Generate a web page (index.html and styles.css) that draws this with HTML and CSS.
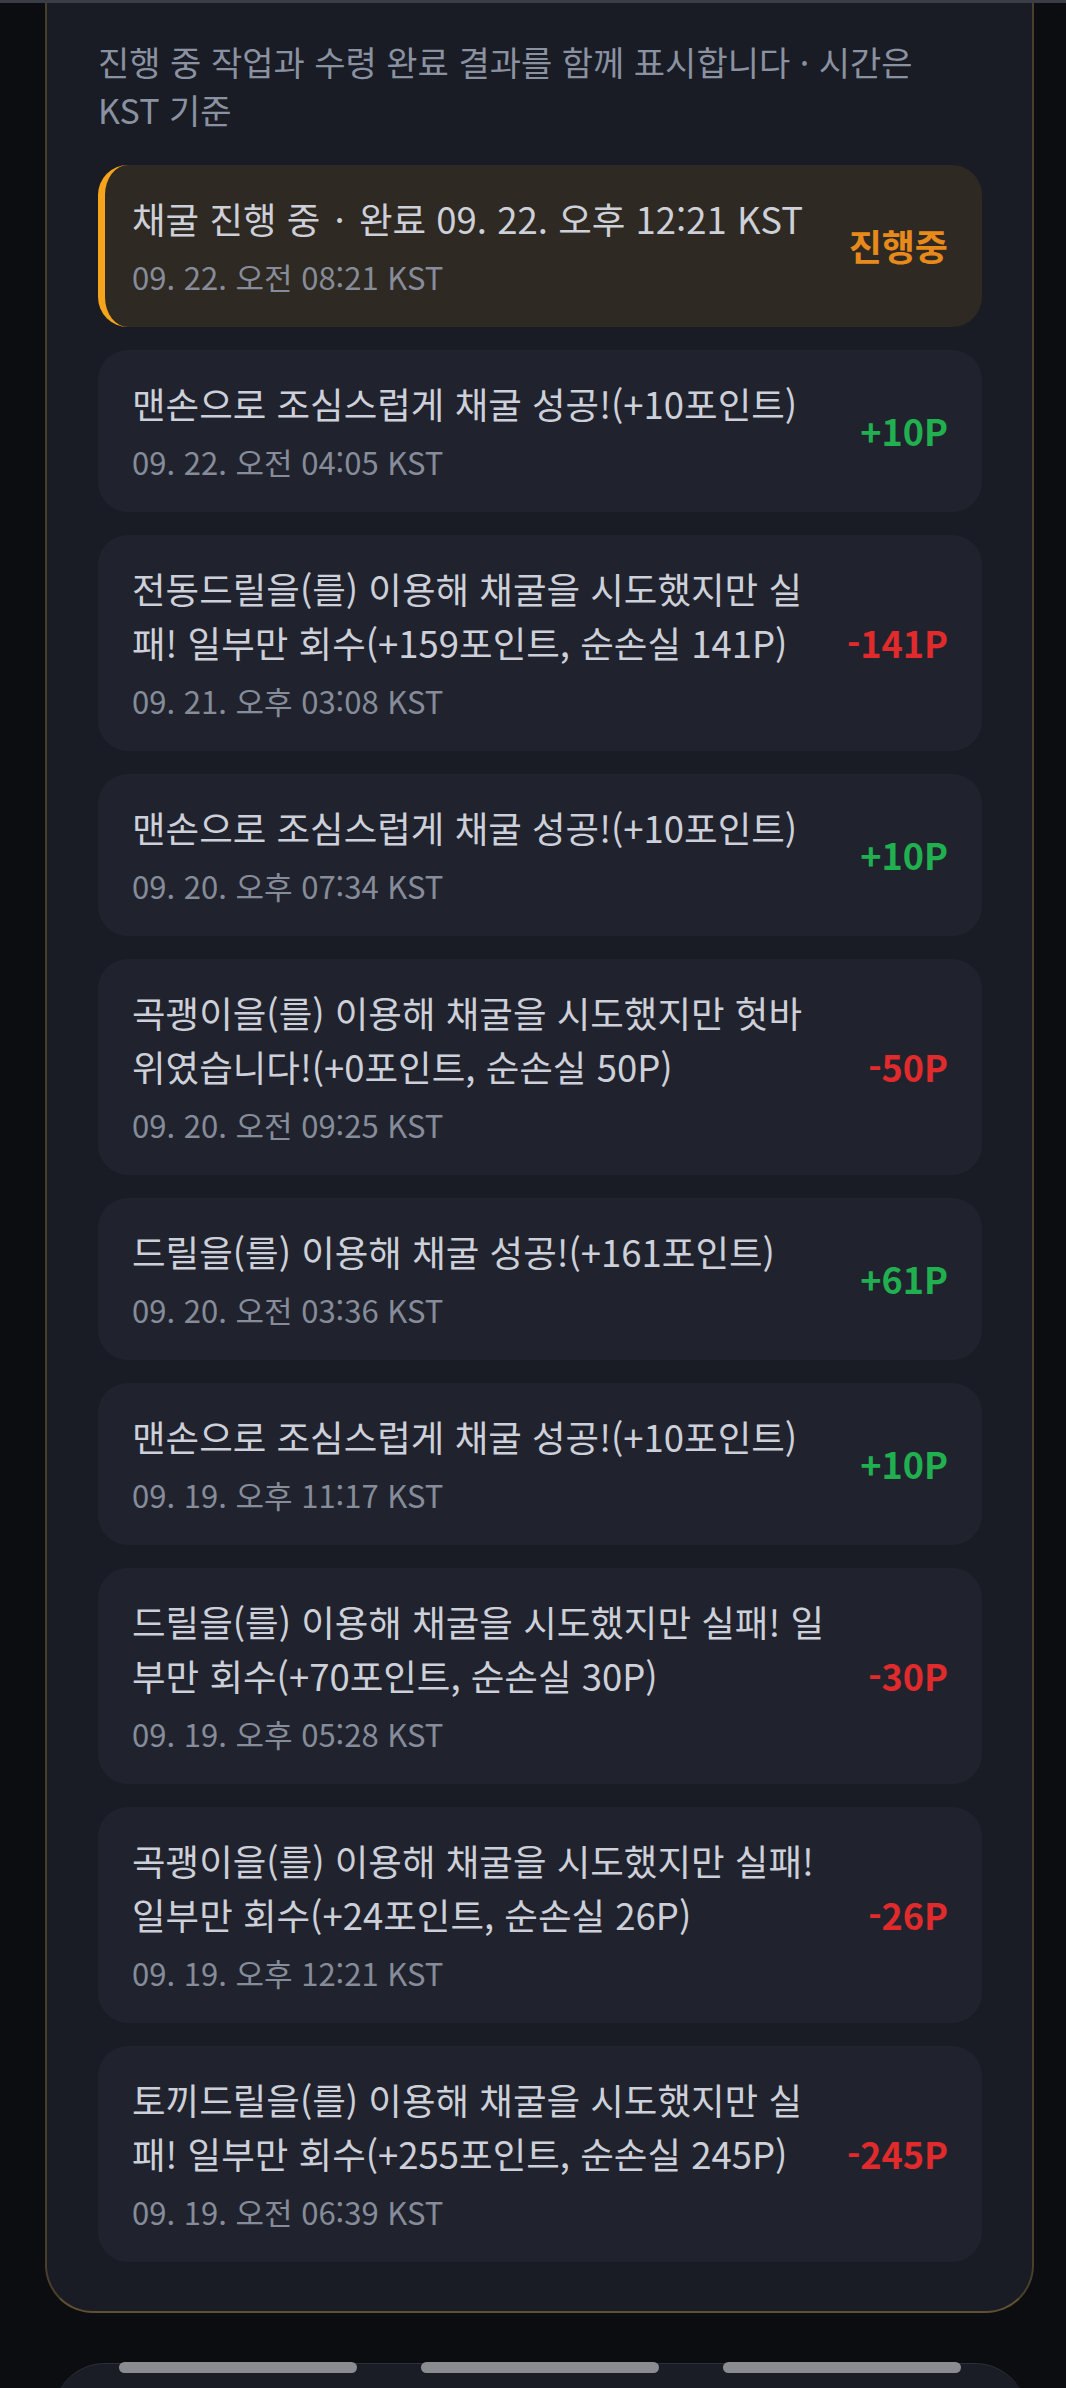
FILE: index.html
```html
<!DOCTYPE html>
<html lang="ko">
<head>
<meta charset="utf-8">
<title>채굴 기록</title>
<link rel="stylesheet" href="styles.css">
</head>
<body>
<div class="topbar"></div>
<section class="panel">
  <p class="intro">진행 중 작업과 수령 완료 결과를 함께 표시합니다 · 시간은 KST 기준</p>
  <ul class="log">
    <li class="entry entry--active">
      <div class="entry-main">
        <div class="entry-title">채굴 진행 중 <span class="sep">·</span> 완료 09. 22. 오후 12:21 KST</div>
        <div class="entry-time">09. 22. 오전 08:21 KST</div>
      </div>
      <div class="entry-amount amount--pending">진행중</div>
    </li>
    <li class="entry">
      <div class="entry-main">
        <div class="entry-title">맨손으로 조심스럽게 채굴 성공!(+10포인트)</div>
        <div class="entry-time">09. 22. 오전 04:05 KST</div>
      </div>
      <div class="entry-amount amount--plus">+10P</div>
    </li>
    <li class="entry">
      <div class="entry-main">
        <div class="entry-title">전동드릴을(를) 이용해 채굴을 시도했지만 실패! 일부만 회수(+159포인트, 순손실 141P)</div>
        <div class="entry-time">09. 21. 오후 03:08 KST</div>
      </div>
      <div class="entry-amount amount--minus">-141P</div>
    </li>
    <li class="entry">
      <div class="entry-main">
        <div class="entry-title">맨손으로 조심스럽게 채굴 성공!(+10포인트)</div>
        <div class="entry-time">09. 20. 오후 07:34 KST</div>
      </div>
      <div class="entry-amount amount--plus">+10P</div>
    </li>
    <li class="entry">
      <div class="entry-main">
        <div class="entry-title">곡괭이을(를) 이용해 채굴을 시도했지만 헛바위였습니다!(+0포인트, 순손실 50P)</div>
        <div class="entry-time">09. 20. 오전 09:25 KST</div>
      </div>
      <div class="entry-amount amount--minus">-50P</div>
    </li>
    <li class="entry">
      <div class="entry-main">
        <div class="entry-title">드릴을(를) 이용해 채굴 성공!(+161포인트)</div>
        <div class="entry-time">09. 20. 오전 03:36 KST</div>
      </div>
      <div class="entry-amount amount--plus">+61P</div>
    </li>
    <li class="entry">
      <div class="entry-main">
        <div class="entry-title">맨손으로 조심스럽게 채굴 성공!(+10포인트)</div>
        <div class="entry-time">09. 19. 오후 11:17 KST</div>
      </div>
      <div class="entry-amount amount--plus">+10P</div>
    </li>
    <li class="entry">
      <div class="entry-main">
        <div class="entry-title">드릴을(를) 이용해 채굴을 시도했지만 실패! 일부만 회수(+70포인트, 순손실 30P)</div>
        <div class="entry-time">09. 19. 오후 05:28 KST</div>
      </div>
      <div class="entry-amount amount--minus">-30P</div>
    </li>
    <li class="entry">
      <div class="entry-main">
        <div class="entry-title">곡괭이을(를) 이용해 채굴을 시도했지만 실패! 일부만 회수(+24포인트, 순손실 26P)</div>
        <div class="entry-time">09. 19. 오후 12:21 KST</div>
      </div>
      <div class="entry-amount amount--minus">-26P</div>
    </li>
    <li class="entry">
      <div class="entry-main">
        <div class="entry-title">토끼드릴을(를) 이용해 채굴을 시도했지만 실패! 일부만 회수(+255포인트, 순손실 245P)</div>
        <div class="entry-time">09. 19. 오전 06:39 KST</div>
      </div>
      <div class="entry-amount amount--minus">-245P</div>
    </li>
  </ul>
</section>
<nav class="tabbar">
  <div class="tab-pills">
    <span class="pill"></span>
    <span class="pill"></span>
    <span class="pill"></span>
  </div>
</nav>
</body>
</html>
```

FILE: styles.css
```css
* { box-sizing: border-box; }

html, body {
  margin: 0;
  padding: 0;
}

body {
  background: #0c0d11;
  font-family: "Noto Sans CJK KR", "Noto Sans", sans-serif;
  height: 2388px;
  overflow: hidden;
}

.topbar {
  height: 3px;
  background: #3a3d45;
}

.panel {
  margin-left: 45px;
  width: 989px;
  background: #191c24;
  border: 2px solid #4a3f2b;
  border-top: none;
  border-bottom-color: #5e5031;
  border-radius: 0 0 48px 48px;
  padding: 35px 50px 49px 51px;
}

.intro {
  margin: 0;
  max-width: 850px;
  font-size: 34px;
  line-height: 48px;
  color: #8a92a2;
}

.log {
  list-style: none;
  margin: 31px 0 0;
  padding: 0;
  display: flex;
  flex-direction: column;
  gap: 23px;
}

.entry {
  display: flex;
  align-items: center;
  gap: 20px;
  background: #20232d;
  border-radius: 30px;
  padding: 27px 34px 28px 34px;
}

.entry--active {
  background: #2e2922;
  border-left: 7px solid #f5a41c;
  padding-left: 27px;
}

.entry-main {
  flex: 1;
  min-width: 0;
}

.entry-title {
  font-size: 36.5px;
  line-height: 54px;
  color: #cdd0d9;
}

.sep {
  margin: 0 4px;
}

.entry-time {
  margin-top: 8px;
  font-size: 31px;
  line-height: 45px;
  color: #868c99;
}

.entry-amount {
  flex: 0 0 auto;
  min-width: 98px;
  text-align: right;
  font-size: 36px;
  font-weight: 700;
  line-height: 1.2;
}

.amount--plus { color: #20b050; }
.amount--minus { color: #e02a2c; }
.amount--pending { color: #e8891c; }

.tabbar {
  margin: 50px 0 0 53px;
  width: 974px;
  height: 140px;
  background: #1a1d25;
  border-top: 1px solid #2c303a;
  border-radius: 52px 52px 0 0;
}

.tab-pills {
  display: flex;
  justify-content: center;
  gap: 64px;
  margin-top: -2px;
}

.pill {
  width: 238px;
  height: 11px;
  border-radius: 6px;
  background: #8a8c92;
}
```
